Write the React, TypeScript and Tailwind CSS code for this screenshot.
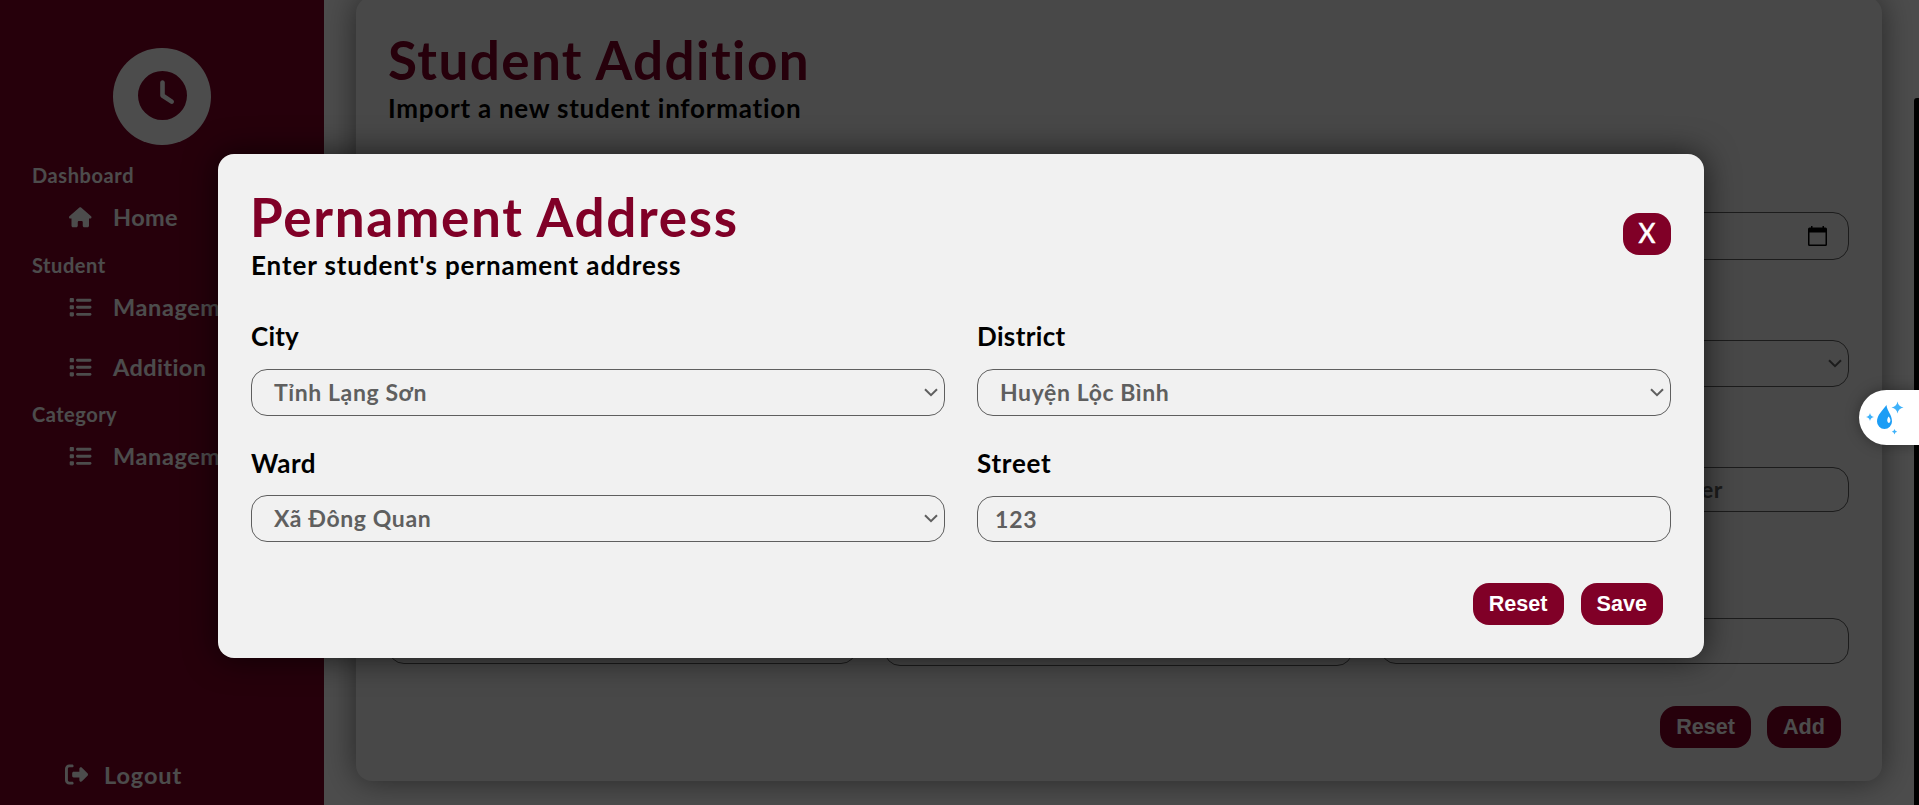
import type { ReactNode } from "react";
import { FaClock, FaHouse, FaList, FaRightFromBracket } from "react-icons/fa6";

function NavLabel({ children, className }: { children: ReactNode; className: string }) {
  return <div className={`h-[30px] pl-8 text-[20px] leading-[30px] font-bold ${className}`}>{children}</div>;
}

function NavItem({ icon, children, className }: { icon: ReactNode; children: ReactNode; className: string }) {
  return (
    <a className="flex h-[60px] items-center pb-[6px] pl-[67px]">
      <span className="flex w-[27px] justify-center text-[22.5px]">{icon}</span>
      <span className={`ml-[19px] text-[23.5px] leading-[30px] font-bold ${className}`}>{children}</span>
    </a>
  );
}

function Chevron() {
  return (
    <svg className="h-[9px] w-[14px] shrink-0" viewBox="0 0 14 9" fill="none" stroke="currentColor" strokeWidth="2">
      <path d="M1 1.2 7 7.2 13 1.2" />
    </svg>
  );
}

function SelectBox({ children }: { children?: ReactNode }) {
  return (
    <div className="flex h-[47px] items-center justify-between rounded-2xl border border-[#5f5f5f] pr-[6px] pl-[22px] text-[#5f5f5f]">
      <span className="text-[23px] leading-[45px] font-bold tracking-[0.6px]">{children}</span>
      <Chevron />
    </div>
  );
}

function Button({ children }: { children: ReactNode }) {
  return (
    <button className="h-[42px] rounded-2xl bg-[#800027] px-4 font-['Liberation_Sans',sans-serif] text-[21.6px] leading-[40px] font-bold text-white">
      {children}
    </button>
  );
}

function Sidebar() {
  return (
    <aside className="flex h-full w-[324px] shrink-0 flex-col bg-[#800027] pt-12 text-white">
      <div className="ml-[113px] flex h-[97px] w-[98px] items-center justify-center rounded-full bg-white pb-[2px] pl-px text-[#800027]">
        <FaClock size={49} />
      </div>
      <nav className="mt-[15px]">
        <NavLabel className="tracking-[0.6px]">Dashboard</NavLabel>
        <NavItem icon={<FaHouse />} className="tracking-[0.4px]">Home</NavItem>
        <NavLabel className="tracking-[0.55px]">Student</NavLabel>
        <NavItem icon={<FaList />} className="tracking-[0.6px]">Management</NavItem>
        <NavItem icon={<FaList />} className="tracking-[0.4px]">Addition</NavItem>
        <NavLabel className="-mt-px tracking-[0.5px]">Category</NavLabel>
        <NavItem icon={<FaList />} className="tracking-[0.6px]">Management</NavItem>
      </nav>
      <a className="mt-auto mb-[14px] flex h-[34px] items-center pl-[65px]">
        <FaRightFromBracket size={23} />
        <span className="ml-[16px] pt-[2px] text-[23.5px] leading-[32px] font-bold tracking-[0.9px]">Logout</span>
      </a>
    </aside>
  );
}

function StudentForm() {
  const border = "rounded-2xl border border-[#5f5f5f] text-[#5f5f5f]";
  return (
    <main className="h-full grow overflow-hidden px-8">
      <section className="-mt-[3px] flex h-[784px] w-[1526px] flex-col rounded-2xl bg-[#f1f1f1] pt-[30px] pr-[33px] pl-8 shadow-[0_0_32px_rgba(0,0,0,0.5)]">
        <h1 className="h-16 pt-px text-[53px] leading-[64px] font-bold tracking-[1.4px] text-[#800027]">Student Addition</h1>
        <p className="h-8 pt-px text-[26px] leading-[32px] font-bold tracking-[0.75px] text-black">Import a new student information</p>
        <div className="mt-[89px] grid grid-cols-3 gap-x-[27px]">
          <div className="flex flex-col justify-end">
            <div className={`h-[46px] ${border}`} />
          </div>
          <div className="flex flex-col justify-end">
            <div className={`-mb-[2px] h-[48px] ${border}`} />
          </div>
          <div className="flex flex-col">
            <div className={`flex h-12 items-center justify-end pr-[21px] ${border}`}>
              <svg className="h-5 w-[19px] text-black" viewBox="0 0 19 20" fill="currentColor">
                <path
                  d="M3 0h1.500v1.500h10V0H16v1.500h1.500a1.500 1.500 0 0 1 1.500 1.500v15.500a1.500 1.500 0 0 1-1.500 1.500h-16A1.500 1.500 0 0 1 0 18.500V3A1.500 1.500 0 0 1 1.500 1.500H3zM1.500 6.500v12h16v-12z"
                  fillRule="evenodd"
                />
              </svg>
            </div>
            <div className={`mt-20 flex h-[47px] items-center justify-end pr-[6px] ${border}`}>
              <Chevron />
            </div>
            <div className={`mt-20 flex h-[45px] items-center pb-px pl-[17px] ${border}`}>
              <span className="w-[325px] text-right text-[23px] font-bold tracking-[0.6px] whitespace-nowrap">Enter phone number</span>
            </div>
            <div className={`mt-[106px] h-[46px] ${border}`} />
          </div>
        </div>
        <div className="mt-[42px] mr-2 flex justify-end gap-4">
          <Button>Reset</Button>
          <Button>Add</Button>
        </div>
      </section>
    </main>
  );
}

function AddressDialog() {
  return (
    <div className="h-[504px] w-[1486px] rounded-2xl bg-[#f1f1f1] px-[33px] pt-[30px] shadow-[0_0_32px_rgba(0,0,0,0.65)]">
      <header className="flex items-start justify-between">
        <div>
          <h2 className="-ml-px h-16 pt-px text-[53px] leading-[64px] font-bold tracking-[1.7px] text-[#800027]">Pernament Address</h2>
          <p className="h-8 pt-px text-[26px] leading-[32px] font-bold tracking-[0.9px] text-black">Enter student's pernament address</p>
        </div>
        <button className="mt-[29px] flex h-[42px] w-12 items-center justify-center rounded-2xl bg-[#800027] text-white">
          <span className="pb-[3px] text-[26px] leading-[38px] [-webkit-text-stroke:0.6px_white]">X</span>
        </button>
      </header>
      <div className="mt-10 grid grid-cols-2 gap-x-8 text-[26px] leading-[32px] font-bold text-black">
        <div className="flex flex-col gap-[17px]">
          <label className="tracking-[0.2px]">City</label>
          <SelectBox>Tỉnh Lạng Sơn</SelectBox>
        </div>
        <div className="flex flex-col gap-[17px]">
          <label className="tracking-[0.35px]">District</label>
          <SelectBox>Huyện Lộc Bình</SelectBox>
        </div>
        <div className="mt-[31px] flex flex-col gap-4">
          <label className="tracking-[0.5px]">Ward</label>
          <SelectBox>Xã Đông Quan</SelectBox>
        </div>
        <div className="mt-[31px] flex flex-col gap-[17px]">
          <label className="tracking-[0.75px]">Street</label>
          <div className="h-[46px] rounded-2xl border border-[#5f5f5f] pl-[17px] text-[23px] leading-[45px] tracking-[0.8px] text-[#5f5f5f]">123</div>
        </div>
      </div>
      <footer className="mt-[41px] mr-2 flex justify-end gap-[17px]">
        <Button>Reset</Button>
        <Button>Save</Button>
      </footer>
    </div>
  );
}

function DropWidget() {
  return (
    <div className="absolute top-[390px] right-0 h-[55px] w-[60px] rounded-l-full bg-white shadow-[0_0_14px_rgba(0,0,0,0.35)]">
      <svg className="h-[55px] w-[60px]" viewBox="0 0 60 55">
        <path d="M27.500 15c.5 6 5.500 9.500 5.500 16.500a7.500 7.500 0 0 1-15 0C18 25 23.500 20.500 27.500 15z" fill="#1c9df5" />
        <path d="M29.500 26.500c2.200 2 2.600 5.500.5 6.500-2.300-.6-2.200-4-.5-6.500z" fill="#fff" />
        <g fill="#3fb2fa">
          <path d="M38.500 11.500q.8 5 6 6-5.200 1-6 6-.8-5-6-6 5.200-1 6-6z" />
          <path d="M11 23q.6 3.500 4 4-3.400.5-4 4-.6-3.500-4-4 3.400-.5 4-4z" />
          <path d="M35.500 39q.4 2.300 2.700 2.700-2.300.4-2.700 2.700-.4-2.300-2.700-2.700 2.300-.4 2.700-2.700z" />
        </g>
      </svg>
    </div>
  );
}

export default function App() {
  return (
    <div className="relative h-[805px] w-[1919px] overflow-hidden bg-white font-['Lato','Noto_Sans',sans-serif] [font-variant-ligatures:none]">
      <div className="flex h-full">
        <Sidebar />
        <StudentForm />
      </div>
      <div className="absolute inset-0 bg-black/70 pt-[154px] pl-[218px]">
        <AddressDialog />
      </div>
      <div className="absolute top-[98px] right-0 bottom-0 w-[5px] rounded-tl-[3px] bg-black" />
      <DropWidget />
    </div>
  );
}
